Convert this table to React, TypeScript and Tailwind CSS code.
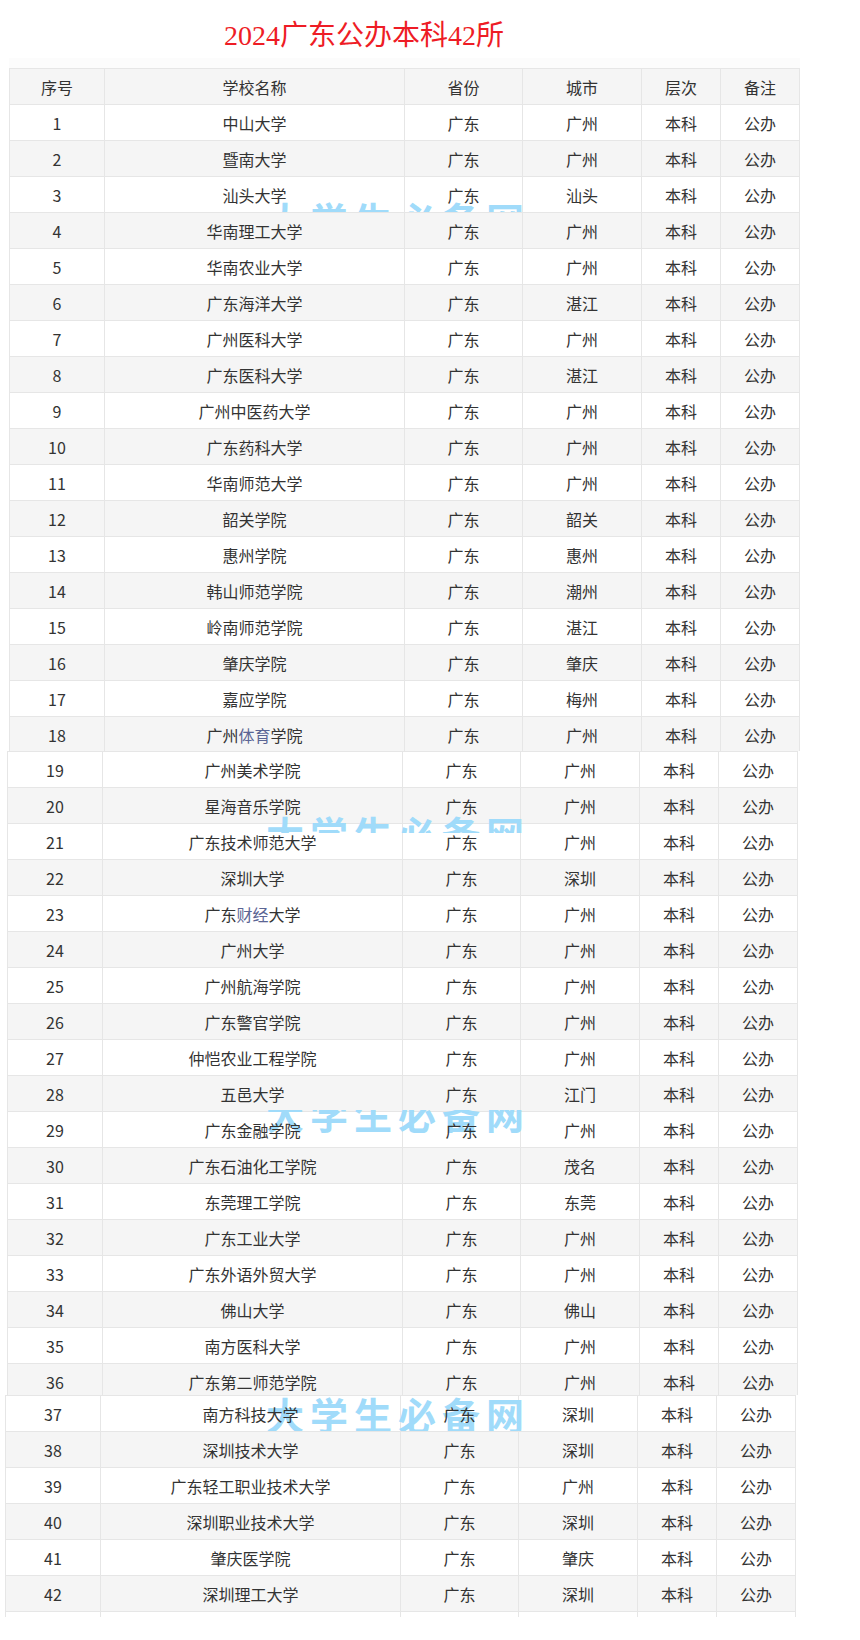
type School = { name: string; city: string; tint?: string };

const schools: School[] = [
  { name: "中山大学", city: "广州" },
  { name: "暨南大学", city: "广州" },
  { name: "汕头大学", city: "汕头" },
  { name: "华南理工大学", city: "广州" },
  { name: "华南农业大学", city: "广州" },
  { name: "广东海洋大学", city: "湛江" },
  { name: "广州医科大学", city: "广州" },
  { name: "广东医科大学", city: "湛江" },
  { name: "广州中医药大学", city: "广州" },
  { name: "广东药科大学", city: "广州" },
  { name: "华南师范大学", city: "广州" },
  { name: "韶关学院", city: "韶关" },
  { name: "惠州学院", city: "惠州" },
  { name: "韩山师范学院", city: "潮州" },
  { name: "岭南师范学院", city: "湛江" },
  { name: "肇庆学院", city: "肇庆" },
  { name: "嘉应学院", city: "梅州" },
  { name: "广州体育学院", city: "广州", tint: "体育" },
  { name: "广州美术学院", city: "广州" },
  { name: "星海音乐学院", city: "广州" },
  { name: "广东技术师范大学", city: "广州" },
  { name: "深圳大学", city: "深圳" },
  { name: "广东财经大学", city: "广州", tint: "财经" },
  { name: "广州大学", city: "广州" },
  { name: "广州航海学院", city: "广州" },
  { name: "广东警官学院", city: "广州" },
  { name: "仲恺农业工程学院", city: "广州" },
  { name: "五邑大学", city: "江门" },
  { name: "广东金融学院", city: "广州" },
  { name: "广东石油化工学院", city: "茂名" },
  { name: "东莞理工学院", city: "东莞" },
  { name: "广东工业大学", city: "广州" },
  { name: "广东外语外贸大学", city: "广州" },
  { name: "佛山大学", city: "佛山" },
  { name: "南方医科大学", city: "广州" },
  { name: "广东第二师范学院", city: "广州" },
  { name: "南方科技大学", city: "深圳" },
  { name: "深圳技术大学", city: "深圳" },
  { name: "广东轻工职业技术大学", city: "广州" },
  { name: "深圳职业技术大学", city: "深圳" },
  { name: "肇庆医学院", city: "肇庆" },
  { name: "深圳理工大学", city: "深圳" },
];

// renders the name, with the odd bluish bit some rows have
function Name({ school }: { school: School }) {
  if (!school.tint) return <>{school.name}</>;
  const [a, b] = school.name.split(school.tint);
  return (
    <>
      {a}
      <span className="text-[#5b6594]">{school.tint}</span>
      {b}
    </>
  );
}

function Row({ cells, gray }: { cells: React.ReactNode[]; gray?: boolean }) {
  return (
    <div
      className={
        "grid grid-cols-[95px_300px_118px_119px_79px_79px] w-[791px] h-9 border-t border-r border-[#e6e6e6] " +
        (gray ? "bg-[#f5f5f5]" : "")
      }
    >
      {cells.map((c, i) => (
        <div key={i} className="flex items-center justify-center border-l border-[#e6e6e6]">
          <span className="relative z-[2]">{c}</span>
        </div>
      ))}
    </div>
  );
}

function SchoolRow({ index }: { index: number }) {
  const s = schools[index];
  return (
    <Row
      gray={index % 2 === 1}
      cells={[index + 1, <Name school={s} />, "广东", s.city, "本科", "公办"]}
    />
  );
}

const range = (from: number, to: number) =>
  Array.from({ length: to - from }, (_, i) => from + i);

export default function App() {
  return (
    <div className="relative w-[860px] min-h-[1640px] bg-white text-[16px] text-[#333] font-['Noto_Sans_CJK_SC',sans-serif]">
      <div className="h-[58px] pl-[224px] pt-[16px]">
        <h1 className="text-[28px] leading-[40px] font-normal text-[#ee1c25] whitespace-nowrap font-['Liberation_Serif','Noto_Sans_CJK_SC',serif]">
          2024广东公办本科42所
        </h1>
      </div>
      <div className="ml-[9px] w-[791px] h-[10px] bg-[#fcfcfc]" />

      {/* three screenshot pieces, each slightly shifted */}
      <div className="ml-[9px] h-[683px] overflow-hidden">
        <Row gray cells={["序号", "学校名称", "省份", "城市", "层次", "备注"]} />
        {range(0, 18).map((i) => (
          <SchoolRow key={i} index={i} />
        ))}
      </div>
      <div className="ml-[7px] h-[644px] overflow-hidden">
        {range(18, 36).map((i) => (
          <SchoolRow key={i} index={i} />
        ))}
      </div>
      <div className="ml-[5px] h-[222px] overflow-hidden">
        {range(36, 42).map((i) => (
          <SchoolRow key={i} index={i} />
        ))}
        <Row cells={["", "", "", "", "", ""]} />
      </div>

      {/* watermark bits */}
      <div className="absolute z-[1] left-[266px] top-[200px] w-[300px] h-[12px] overflow-hidden">
        <Watermark className="top-0" />
      </div>
      <div className="absolute z-[1] left-[266px] top-[816px] w-[300px] h-[17px] overflow-hidden">
        <Watermark className="top-[-2px]" />
      </div>
      <div className="absolute z-[1] left-[266px] top-[1110px] w-[300px] h-[23px] overflow-hidden">
        <Watermark className="top-[-16px]" />
      </div>
      <div className="absolute z-[1] left-[266px] top-[1395px] w-[300px] h-[36px] overflow-hidden">
        <Watermark className="top-0" />
      </div>
    </div>
  );
}

function Watermark({ className }: { className: string }) {
  return (
    <span
      className={
        "absolute left-0 whitespace-nowrap font-bold text-[38px] leading-[38px] tracking-[6px] text-[#a0dbfa] " +
        className
      }
    >
      大学生必备网
    </span>
  );
}
